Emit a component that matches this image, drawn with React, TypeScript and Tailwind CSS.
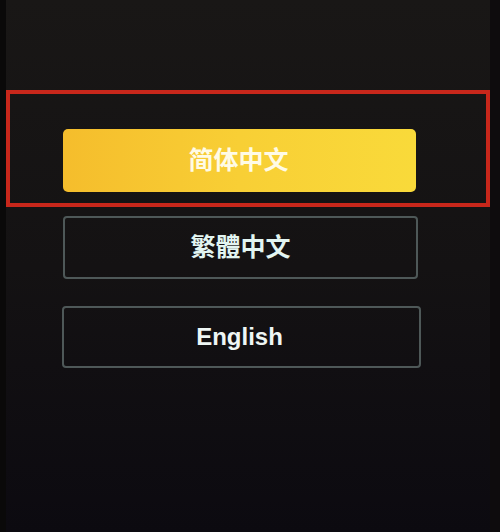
export default function App() {
  return (
    <div
      className="relative w-[500px] h-[532px] overflow-hidden bg-gradient-to-b from-[#191716] via-[#141213] to-[#0c0a10] pt-[90px]"
      style={{ fontFamily: '"Liberation Sans", "Noto Sans CJK SC", "Noto Sans CJK TC", sans-serif' }}
    >
      {/* darker strips at photo edges */}
      <div className="absolute left-0 top-0 h-full w-[6px] bg-[#0a0909]" />
      <div className="absolute right-0 top-0 h-full w-[10px] bg-[#0e0c0d]" />

      <div className="relative ml-[6px] w-[484px] h-[117px] border-4 border-[#c8271b] pl-[53px] pt-[35px]">
        <div className="w-[353px] h-[63px] rounded-[5px] bg-gradient-to-r from-[#f5bd2c] via-[#f8cf35] to-[#f9da3a] flex items-center justify-center pr-[2px]">
          <span className="text-[25px] font-bold text-[#fffbe6]">简体中文</span>
        </div>
      </div>

      <div className="relative ml-[63px] mt-[9px] w-[355px] h-[63px] rounded-[4px] border-2 border-[#4e5858] flex items-center justify-center">
        <span className="text-[25px] font-bold text-[#e2f5f1]">繁體中文</span>
      </div>

      <div className="relative ml-[62px] mt-[27px] w-[359px] h-[62px] rounded-[4px] border-2 border-[#4e5858] flex items-center justify-center pr-[4px]">
        <span className="text-[24px] font-bold text-[#eef6f4]">English</span>
      </div>
    </div>
  );
}
